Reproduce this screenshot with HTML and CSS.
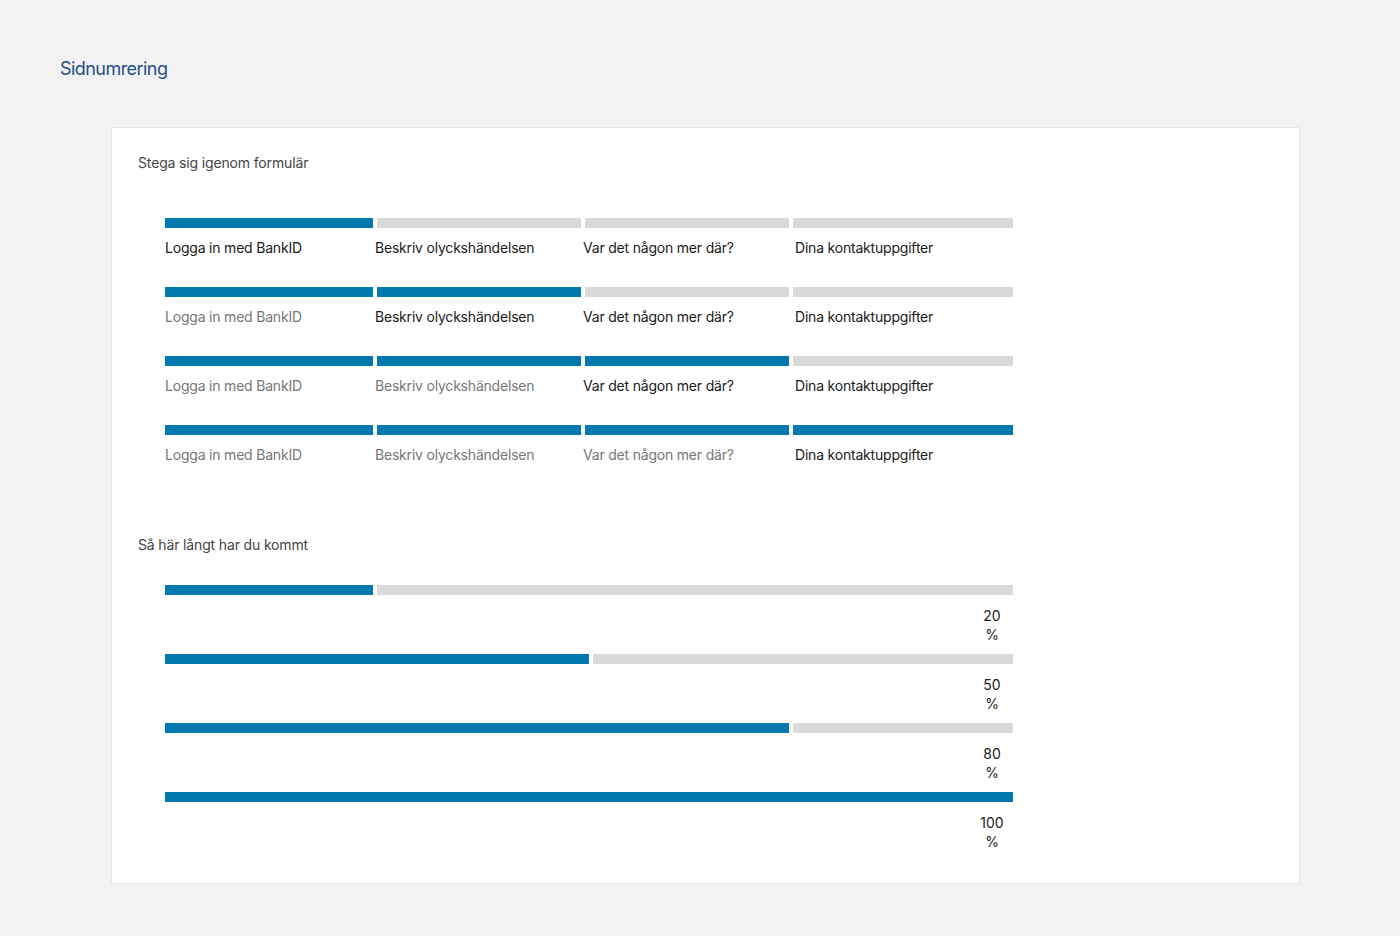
FILE: index.html
```html
<!DOCTYPE html>
<html lang="sv">
<head>
<meta charset="utf-8">
<title>Sidnumrering</title>
<link rel="stylesheet" href="styles.css">
</head>
<body>
<h1 class="page-title">Sidnumrering</h1>
<main class="card">
  <h2 class="section-title">Stega sig igenom formulär</h2>
  <div class="steppers">
    <ol class="stepper">
      <li class="step active"><span class="bar on"></span><span class="label">Logga in med BankID</span></li>
      <li class="step"><span class="bar"></span><span class="label">Beskriv olyckshändelsen</span></li>
      <li class="step"><span class="bar"></span><span class="label">Var det någon mer där?</span></li>
      <li class="step"><span class="bar"></span><span class="label">Dina kontaktuppgifter</span></li>
    </ol>
    <ol class="stepper">
      <li class="step done"><span class="bar on"></span><span class="label">Logga in med BankID</span></li>
      <li class="step active"><span class="bar on"></span><span class="label">Beskriv olyckshändelsen</span></li>
      <li class="step"><span class="bar"></span><span class="label">Var det någon mer där?</span></li>
      <li class="step"><span class="bar"></span><span class="label">Dina kontaktuppgifter</span></li>
    </ol>
    <ol class="stepper">
      <li class="step done"><span class="bar on"></span><span class="label">Logga in med BankID</span></li>
      <li class="step done"><span class="bar on"></span><span class="label">Beskriv olyckshändelsen</span></li>
      <li class="step active"><span class="bar on"></span><span class="label">Var det någon mer där?</span></li>
      <li class="step"><span class="bar"></span><span class="label">Dina kontaktuppgifter</span></li>
    </ol>
    <ol class="stepper">
      <li class="step done"><span class="bar on"></span><span class="label">Logga in med BankID</span></li>
      <li class="step done"><span class="bar on"></span><span class="label">Beskriv olyckshändelsen</span></li>
      <li class="step done"><span class="bar on"></span><span class="label">Var det någon mer där?</span></li>
      <li class="step active"><span class="bar on"></span><span class="label">Dina kontaktuppgifter</span></li>
    </ol>
  </div>

  <h2 class="section-title second">Så här långt har du kommt</h2>
  <div class="progress-list">
    <div class="progress">
      <div class="track"><span class="fill" style="width:208px"></span><span class="rest"></span></div>
      <div class="percent">20 %</div>
    </div>
    <div class="progress">
      <div class="track"><span class="fill" style="width:424px"></span><span class="rest"></span></div>
      <div class="percent">50 %</div>
    </div>
    <div class="progress">
      <div class="track"><span class="fill" style="width:624px"></span><span class="rest"></span></div>
      <div class="percent">80 %</div>
    </div>
    <div class="progress">
      <div class="track"><span class="fill" style="width:848px"></span></div>
      <div class="percent">100 %</div>
    </div>
  </div>
</main>
</body>
</html>
```

FILE: styles.css
```css
* { box-sizing: border-box; }

html, body { margin: 0; padding: 0; }

body {
  background: #f2f2f2;
  font-family: Inter, "Noto Sans", "Liberation Sans", sans-serif;
  color: #1a1a1a;
  padding: 58px 100px 53px 60px;
}

.page-title {
  margin: 0;
  font-size: 18px;
  line-height: 22px;
  font-weight: 400;
  letter-spacing: -0.55px;
  color: #1f4f8a;
}

.card {
  margin: 47px 0 0 51px;
  background: #fff;
  border: 1px solid #e6e6e6;
  padding: 25px 26px 32px 26px;
}

.section-title {
  margin: 0;
  font-size: 14px;
  line-height: 19px;
  font-weight: 400;
  letter-spacing: -0.15px;
  color: #444;
}

.section-title.second {
  margin-top: 71px;
}

.steppers {
  margin: 46px 0 0 27px;
  display: flex;
  flex-direction: column;
  gap: 30px;
}

.stepper {
  list-style: none;
  margin: 0;
  padding: 0;
  display: grid;
  grid-template-columns: 208px 204px 204px 220px;
  column-gap: 4px;
}

.step {
  display: flex;
  flex-direction: column;
  gap: 10px;
}

.bar {
  display: block;
  height: 10px;
  background: #d9d9d9;
}

.bar.on { background: #0079ae; }

.label {
  font-size: 14px;
  line-height: 19px;
  letter-spacing: -0.2px;
  color: #1a1a1a;
  white-space: nowrap;
}

.step.done .label { color: #777; }

.step:nth-child(2) .label,
.step:nth-child(3) .label { margin-left: -2px; }
.step:nth-child(4) .label { margin-left: 2px; }

.progress-list {
  margin: 31px 0 0 27px;
  width: 848px;
  display: flex;
  flex-direction: column;
  gap: 10px;
}

.progress {
  display: flex;
  flex-direction: column;
  gap: 11px;
}

.track {
  display: flex;
  gap: 4px;
  height: 10px;
}

.fill {
  display: block;
  background: #0079ae;
}

.rest {
  display: block;
  flex: 1;
  background: #d9d9d9;
}

.percent {
  align-self: flex-end;
  width: 30px;
  margin-right: 6px;
  text-align: center;
  font-size: 14px;
  line-height: 19px;
  color: #1a1a1a;
}
```
